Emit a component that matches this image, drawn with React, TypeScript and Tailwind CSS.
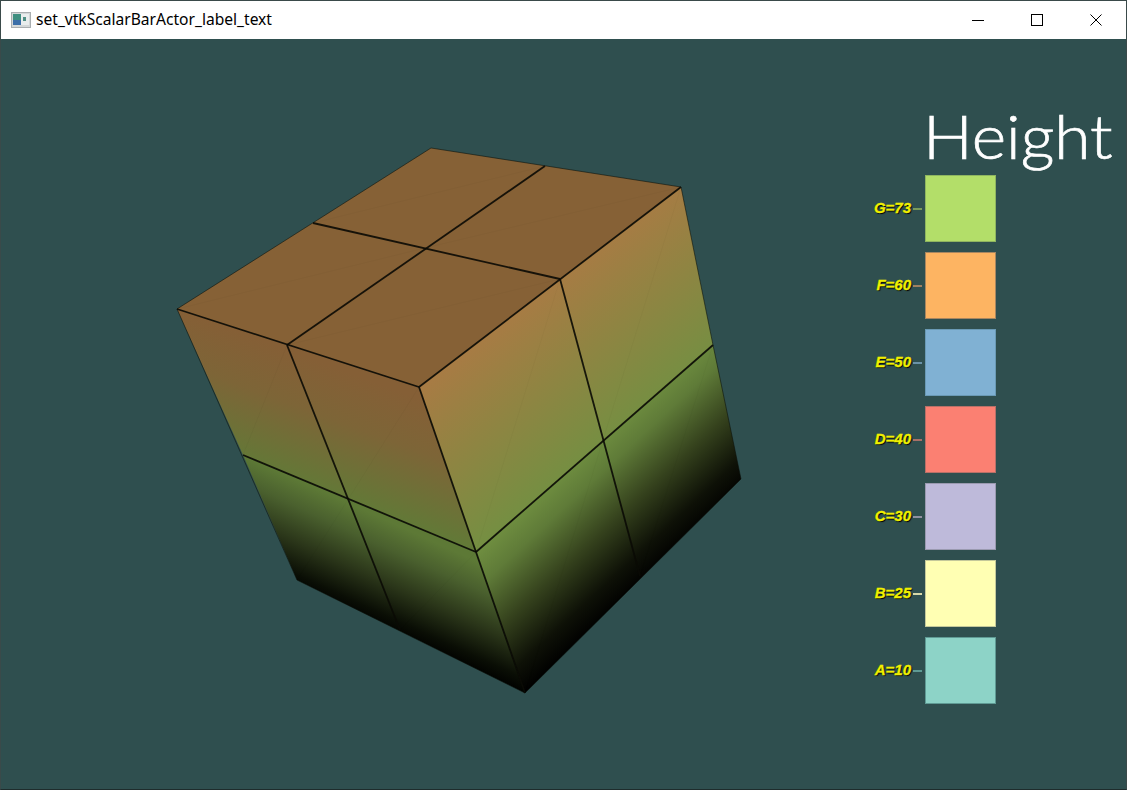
type P = [number, number];

const A: P = [431, 148], B: P = [681, 187], C: P = [419, 387], D: P = [177, 309];
const AB: P = [545, 166], BC: P = [560, 279], CD: P = [287, 345], DA: P = [313, 223], T: P = [425, 248];
const LM: P = [243, 455], LC: P = [349, 498], CM: P = [476, 552], RC: P = [603, 440], RM: P = [713, 345];
const BL: P = [297, 580], BM: P = [400, 630], BN: P = [525, 693], BR: P = [640, 576], BE: P = [741, 479];

function grad(a: P, b: P, c: P, d: P) {
  const ux = b[0] - a[0] + d[0] - c[0], uy = b[1] - a[1] + d[1] - c[1];
  const l = Math.hypot(ux, uy);
  const nx = -uy / l, ny = ux / l;
  const d1 = (c[0] - a[0]) * nx + (c[1] - a[1]) * ny;
  const d2 = (d[0] - a[0]) * nx + (d[1] - a[1]) * ny;
  const dist = Math.abs(d1) > Math.abs(d2) ? d1 : d2;
  return { x1: a[0], y1: a[1], x2: a[0] + nx * dist, y2: a[1] + ny * dist };
}
const pts = (...p: P[]) => p.map((q) => q.join(",")).join(" ");

const leftUp = grad(D, C, LM, CM);
const leftLow = grad(LM, CM, BL, BN);
const rightUp = grad(C, B, CM, RM);
const rightLow = grad(CM, RM, BN, BE);

const bars = [
  { label: "G=73", color: "bg-[#b3de69]", border: "border-[#8fb560]", tick: "bg-[#7a9a5a]" },
  { label: "F=60", color: "bg-[#fdb462]", border: "border-[#a88660]", tick: "bg-[#a08060]" },
  { label: "E=50", color: "bg-[#80b1d3]", border: "border-[#6a9ab5]", tick: "bg-[#6a92a8]" },
  { label: "D=40", color: "bg-[#fb8072]", border: "border-[#b87068]", tick: "bg-[#a87068]" },
  { label: "C=30", color: "bg-[#bebada]", border: "border-[#9a9ab0]", tick: "bg-[#9090a0]" },
  { label: "B=25", color: "bg-[#ffffb3]", border: "border-[#c4c89a]", tick: "bg-[#d8d8a8]" },
  { label: "A=10", color: "bg-[#8dd3c7]", border: "border-[#5f9a94]", tick: "bg-[#5f9a94]" },
];

const faint: [P, P][] = [
  [D, T], [CD, BC], [DA, AB], [T, B],
  [CD, LM], [C, LC], [LC, BL], [CM, BM],
  [BC, CM], [B, RC], [RC, BN], [RM, BR],
];
const inner: [P, P][] = [
  [DA, BC], [AB, CD], [D, C], [C, B], [CD, BM], [C, CM], [CM, BN], [BC, BR], [LM, CM], [CM, RM],
];

function Cube() {
  return (
    <svg viewBox="1 39 800 750" className="block w-[800px] h-[750px] shrink-0">
      <defs>
        <filter id="soft" x="-5%" y="-5%" width="110%" height="110%" colorInterpolationFilters="sRGB">
          <feGaussianBlur stdDeviation="0.35" />
        </filter>
        <linearGradient id="lu" gradientUnits="userSpaceOnUse" {...leftUp}>
          <stop offset="0" stopColor="#855f36" />
          <stop offset="0.4" stopColor="#7d6537" />
          <stop offset="1" stopColor="#617a37" />
        </linearGradient>
        <linearGradient id="ll" gradientUnits="userSpaceOnUse" {...leftLow}>
          <stop offset="0" stopColor="#5d7936" />
          <stop offset="0.25" stopColor="#4a602e" />
          <stop offset="0.58" stopColor="#2a3519" />
          <stop offset="0.87" stopColor="#0a0e05" />
          <stop offset="1" stopColor="#010200" />
        </linearGradient>
        <linearGradient id="ru" gradientUnits="userSpaceOnUse" {...rightUp}>
          <stop offset="0" stopColor="#a87b44" />
          <stop offset="0.45" stopColor="#908442" />
          <stop offset="1" stopColor="#748f42" />
        </linearGradient>
        <linearGradient id="rl" gradientUnits="userSpaceOnUse" {...rightLow}>
          <stop offset="0" stopColor="#6f8e40" />
          <stop offset="0.2" stopColor="#5f7b38" />
          <stop offset="0.52" stopColor="#35421d" />
          <stop offset="0.82" stopColor="#0e1107" />
          <stop offset="1" stopColor="#000000" />
        </linearGradient>
      </defs>
      <g filter="url(#soft)">
        <polygon points={pts(A, B, C, D)} fill="#866136" />
        <polygon points={pts(D, C, CM, LM)} fill="url(#lu)" />
        <polygon points={pts(LM, CM, BN, BL)} fill="url(#ll)" />
        <polygon points={pts(C, B, RM, CM)} fill="url(#ru)" />
        <polygon points={pts(CM, RM, BE, BN)} fill="url(#rl)" />
        {faint.map(([a, b], i) => (
          <line key={i} x1={a[0]} y1={a[1]} x2={b[0]} y2={b[1]} stroke="#000" strokeOpacity="0.025" strokeWidth="1" />
        ))}
        <polygon points={pts(A, B, RM, BE, BN, BL, D)} fill="none" stroke="#0b0f08" strokeOpacity="0.55" strokeWidth="1" />
        {inner.map(([a, b], i) => (
          <line key={i} x1={a[0]} y1={a[1]} x2={b[0]} y2={b[1]} stroke="#0a0a04" strokeOpacity="0.9" strokeWidth="1.8" />
        ))}
      </g>
    </svg>
  );
}

function ScalarBar() {
  return (
    <div className="ml-auto flex flex-col items-end pr-[13px] pt-[59px]">
      <div className="h-[79px] text-white font-['Lato',sans-serif] font-light text-[61px] leading-[79px] whitespace-nowrap mt-[-2px] scale-x-[1.08] origin-right [-webkit-text-stroke:0.7px_white]">
        Height
      </div>
      <div className="flex flex-col gap-[10px] mr-[117px]">
        {bars.map((b) => (
          <div key={b.label} className="flex items-center justify-end h-[67px]">
            <span className="mb-[3px] text-right text-[#f0f000] font-['Liberation_Sans',sans-serif] font-bold italic text-[15px] leading-none [text-shadow:1px_1px_1px_#000] [-webkit-text-stroke:0.3px_#f0f000]">
              {b.label}
            </span>
            <span className={`${b.tick} block w-[9px] h-[2px] ml-[2px] mr-[3px]`} />
            <div className={`${b.color} ${b.border} border w-[71px] h-[67px]`} />
          </div>
        ))}
      </div>
    </div>
  );
}

export default function App() {
  return (
    <div className="w-[1127px] h-[790px] flex flex-col bg-[#2f4f4f] border border-[#3a4a4a] border-b-[#1e2c2c] overflow-hidden">
      <div className="h-[38px] shrink-0 bg-white flex items-center">
        <svg width="20" height="16" viewBox="0 0 20 16" className="ml-[10px] shrink-0">
          <rect x="0.5" y="0.5" width="19" height="15" fill="#d3d7d8" stroke="#a9aeb0" />
          <rect x="2" y="2" width="8" height="11" fill="#3f8f80" />
          <rect x="2" y="8" width="8" height="5" fill="#3b6ea8" />
          <rect x="10" y="2" width="8" height="11" fill="#e9eded" />
          <rect x="12" y="5" width="3" height="4" fill="#4f8f84" />
        </svg>
        <span className="ml-[5px] text-[15.6px] text-black font-['Noto_Sans',sans-serif] whitespace-nowrap">
          set_vtkScalarBarActor_label_text
        </span>
        <div className="ml-auto flex items-center mr-[1px]">
          <div className="w-[59px] h-[38px] flex items-center justify-center">
            <svg width="12" height="12" viewBox="0 0 12 12"><path d="M0 6.5H12" stroke="#000" strokeWidth="1" /></svg>
          </div>
          <div className="w-[59px] h-[38px] flex items-center justify-center">
            <svg width="12" height="12" viewBox="0 0 12 12"><rect x="0.5" y="0.5" width="11" height="11" fill="none" stroke="#000" /></svg>
          </div>
          <div className="w-[59px] h-[38px] flex items-center justify-center">
            <svg width="12" height="12" viewBox="0 0 12 12"><path d="M0.5 0.5L11.5 11.5M11.5 0.5L0.5 11.5" stroke="#000" strokeWidth="1" /></svg>
          </div>
        </div>
      </div>
      <div className="flex-1 flex min-h-0">
        <Cube />
        <ScalarBar />
      </div>
    </div>
  );
}
